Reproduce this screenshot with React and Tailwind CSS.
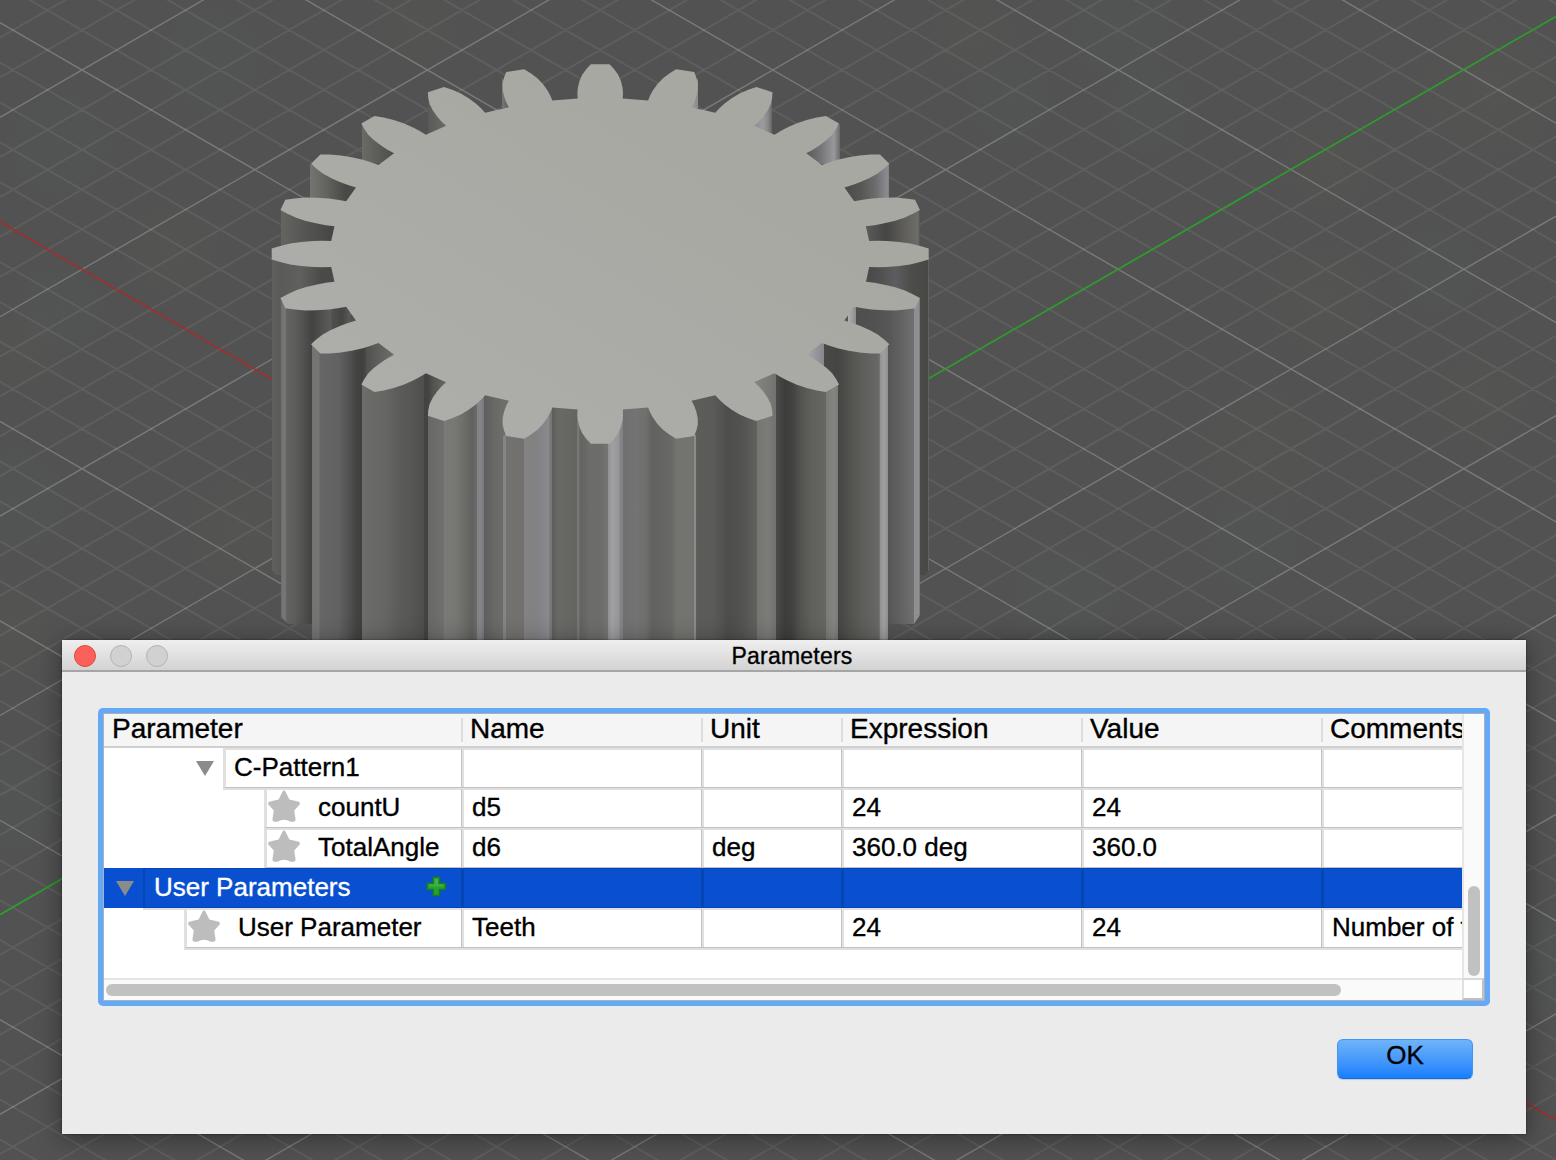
import React from "react";

const SLOPE = 0.5772;
const STEP = 39.88;

function Grid() {
  const minor = [];
  const major = [];
  for (let i = -26; i < 54; i++) {
    const a = 22.67 + i * STEP;
    const b = 117.3 + i * STEP;
    const out = i % 5 === 0 ? major : minor;
    if (i !== 5) out.push(`M0 ${a}L1556 ${a + SLOPE * 1556}`);
    if (i !== 20) out.push(`M0 ${b}L1556 ${b - SLOPE * 1556}`);
  }
  return (
    <g fill="none">
      <path d={minor.join("")} stroke="#ffffff" strokeOpacity="0.07" strokeWidth="2" />
      <path d={major.join("")} stroke="#ffffff" strokeOpacity="0.23" strokeWidth="1.4" />
      <path d={`M0 222L1556 ${222 + SLOPE * 1556}`} stroke="#a62c2c" strokeWidth="1.5" />
      <path d={`M0 914.6L1556 ${914.6 - SLOPE * 1556}`} stroke="#2f9a2f" strokeWidth="1.8" />
    </g>
  );
}

/* Gear outline: [radius, half width] of a tooth flank from root to tip. */
const FLANK = [
  [269, 22.5],
  [278, 22.8],
  [287, 22.4],
  [299, 20.8],
  [310, 18],
  [320, 13.8],
  [328.5, 9.3],
];

function gearPath() {
  const pts = [];
  const put = (r, t, ang) => {
    const x = r * Math.cos(ang) - t * Math.sin(ang);
    const y = r * Math.sin(ang) + t * Math.cos(ang);
    pts.push(`${(600.2 + x).toFixed(2)} ${(254 + y * 0.578).toFixed(2)}`);
  };
  for (let k = 0; k < 24; k++) {
    const a = (k * Math.PI) / 12;
    FLANK.forEach(([r, w]) => put(r, -w, a));
    [...FLANK].reverse().forEach(([r, w]) => put(r, w, a));
  }
  return "M" + pts.join("L") + "Z";
}

/* Side walls, back to front: polygon points and colour stops across x. */
const WALLS = [
  { p: "502,78 510,90 510,112 502,108", x: [502, 510], s: [[502, "#777775"], [510, "#5c5c5a"]] },
  { p: "428,92 446,110 446,132 428,142", x: [428, 446], s: [[428, "#5a5a58"], [446, "#6a6a67"]] },
  { p: "362,124 394,145 394,158 362,168", x: [362, 394], s: [[362, "#6a6a67"], [378, "#5c5c59"], [394, "#4c4c4a"]] },
  { p: "310,164 356,182 356,206 310,206", x: [310, 356], s: [[310, "#747471"], [325, "#646461"], [345, "#494947"], [356, "#494947"]] },
  { p: "281,210 333,220 333,246 281,252", x: [281, 333], s: [[281, "#646461"], [310, "#525250"], [333, "#464644"]] },
  { p: "698,78 691,95 691,112 698,108", x: [690, 698], s: [[690, "#a2a2a2"], [698, "#8b8b8d"]] },
  { p: "772,92 753,115 753,132 772,140", x: [753, 772], s: [[753, "#8d8d90"], [763, "#9b9ba0"], [768, "#88888b"], [772, "#666667"]] },
  { p: "840,124 806,150 806,162 840,166", x: [806, 840], s: [[806, "#585857"], [820, "#737375"], [834, "#98989c"], [838, "#7a7a7c"], [840, "#6a6a6a"]] },
  { p: "889,164 845,184 845,206 889,206", x: [845, 890], s: [[845, "#4c4c4a"], [860, "#555553"], [876, "#6d6d6e"], [885, "#87878b"], [888, "#8c8c90"], [890, "#6d6d6d"]] },
  { p: "919.5,210 867,222 867,246 919.5,250", x: [867, 920], s: [[867, "#5a5a5b"], [886, "#454544"], [905, "#605f5c"], [918, "#6d6c68"], [920, "#5a5a58"]] },
  { p: "272,254 333,265 333,575 276,575 272,570", x: [272, 333], s: [[272, "#60605e"], [281, "#5a5a58"], [300, "#60605e"], [322, "#4a4a48"], [333, "#4a4a48"]] },
  { p: "929,256 868,265 868,575 925,575 929,570", x: [868, 929], s: [[868, "#4a4a49"], [880, "#505050"], [895, "#5d5d60"], [912, "#4d4c49"], [928, "#484846"], [928, "#626262"], [929, "#626262"]] },
  { p: "280.5,298 350,295 350,624 288,624 281,617", x: [281, 350], s: [[281, "#646463"], [282, "#767674"], [286, "#747472"], [286, "#646462"], [295, "#5d5d5b"], [304, "#505050"], [312, "#434342"], [331, "#5c5c5b"], [332, "#50504f"], [342, "#454543"], [350, "#5a5a57"]] },
  { p: "920,298 848,295 848,624 914,624 920,615", x: [848, 920], s: [[848, "#b0b0b4"], [856, "#8b8b90"], [856, "#4e4e4c"], [872, "#52514f"], [888, "#565656"], [900, "#616162"], [914, "#707072"], [914, "#8f8f91"], [919, "#8f8f91"], [920, "#6d6d6e"]] },
  { p: "312,345 374,335 396,350 396,641 312,641", x: [312, 396], s: [[312, "#747472"], [319, "#757573"], [320, "#666665"], [338, "#626264"], [347, "#555555"], [355, "#464645"], [362, "#3f3f3d"], [366, "#484846"], [366, "#50504f"], [380, "#60605d"], [396, "#6e6e6b"]] },
  { p: "888,345 826,335 805,350 805,641 888,641", x: [805, 888], s: [[805, "#ababaf"], [824, "#88888c"], [824, "#484846"], [838, "#454543"], [850, "#52524f"], [862, "#5d5d5a"], [878, "#676765"], [880, "#77777a"], [880, "#929294"], [884, "#a0a0a2"], [888, "#8f8f92"]] },
  { p: "362,383 424,368 447,378 447,641 362,641", x: [362, 447], s: [[362, "#6e6e6c"], [372, "#696967"], [385, "#666663"], [398, "#5c5c5a"], [412, "#565653"], [424, "#4e4e4c"], [424, "#434341"], [428, "#434341"], [432, "#50504e"], [447, "#6b6b68"]] },
  { p: "838,384 777,368 753,378 753,641 838,641", x: [753, 838], s: [[753, "#888784"], [776, "#73726f"], [776, "#4b4b49"], [785, "#3d3d3b"], [792, "#414140"], [800, "#52524f"], [812, "#60605d"], [826, "#666663"], [826, "#7b7a76"], [834, "#868581"], [838, "#7c7b78"]] },
  { p: "428,415 484,390 509,396 509,641 428,641", x: [428, 509], s: [[428, "#686866"], [444, "#70706d"], [444, "#7a7a78"], [455, "#777774"], [462, "#706f6c"], [472, "#616160"], [477, "#6b6b6a"], [477, "#838386"], [481, "#858589"], [484, "#777778"], [484, "#5f5f5d"], [494, "#686866"], [503, "#6d6d6a"], [509, "#6d6d6a"]] },
  { p: "772,415 717,390 691,396 691,641 772,641", x: [691, 772], s: [[691, "#5d5c59"], [713, "#5b5b58"], [720, "#555554"], [728, "#4d4d4c"], [742, "#535352"], [754, "#5e5e5c"], [757, "#60605e"], [757, "#757572"], [768, "#7b7b78"], [772, "#777774"]] },
  { p: "503,436 552,403 579,405 579,641 503,641", x: [503, 579], s: [[503, "#858584"], [506, "#858584"], [506, "#73726f"], [524, "#72716e"], [524, "#838384"], [535, "#818182"], [545, "#87878c"], [549, "#89898e"], [550, "#777778"], [552, "#777778"], [552, "#5d5d5a"], [558, "#696966"], [577, "#646461"], [579, "#767673"]] },
  { p: "697,436 649,403 622,405 622,641 698,641", x: [622, 698], s: [[622, "#707072"], [637, "#737373"], [646, "#6f6f6e"], [652, "#62625f"], [660, "#646463"], [672, "#696967"], [676, "#73736f"], [694, "#737370"], [694, "#8b8b8b"], [696, "#8b8b8b"], [696, "#605f5d"], [698, "#605f5d"]] },
  { p: "577,410 623,410 623,641 577,641", x: [577, 623], s: [[577, "#777774"], [579, "#777774"], [580, "#62625f"], [590, "#6d6d6c"], [600, "#6c6c69"], [608, "#757574"], [608, "#919193"], [612, "#9fa0a3"], [619, "#96969a"], [620, "#868689"], [623, "#828284"]] },
];

/* Soft cool and warm patches on the ground: x, y, radius, gradient. */
const COOL = "url(#cool)";
const WARM = "url(#warm)";
const TINTS = [
  [210, 60, 60, COOL], [60, 145, 60, COOL], [415, 25, 55, WARM], [175, 250, 60, WARM],
  [975, 35, 55, WARM], [1010, 100, 50, COOL], [1150, 110, 50, COOL], [1120, 30, 60, COOL],
  [1490, 90, 90, WARM], [1330, 165, 60, WARM], [1320, 300, 70, WARM], [1440, 270, 50, COOL],
  [1260, 450, 80, WARM], [1480, 400, 60, WARM], [1250, 545, 55, COOL], [1065, 600, 60, COOL],
  [20, 350, 50, WARM], [60, 310, 50, COOL], [240, 530, 70, WARM], [15, 500, 60, COOL],
  [10, 630, 60, WARM], [15, 800, 60, COOL], [1540, 960, 60, COOL],
];

function Viewport() {
  return (
    <svg className="block h-full w-full" viewBox="0 0 1556 1160" aria-hidden="true">
      <defs>
        {WALLS.map((w, i) => (
          <linearGradient key={i} id={`wall${i}`} gradientUnits="userSpaceOnUse" x1={w.x[0]} x2={w.x[1]} y1="0" y2="0">
            {w.s.map(([x, c], j) => (
              <stop key={j} offset={(x - w.x[0]) / (w.x[1] - w.x[0])} stopColor={c} />
            ))}
          </linearGradient>
        ))}
        <linearGradient id="face" gradientUnits="userSpaceOnUse" x1="430" y1="420" x2="620" y2="100">
          <stop offset="0" stopColor="#adaea9" />
          <stop offset="1" stopColor="#a7a8a2" />
        </linearGradient>
        <radialGradient id="warm">
          <stop offset="0" stopColor="#706a55" stopOpacity="0.08" />
          <stop offset="1" stopColor="#706a55" stopOpacity="0" />
        </radialGradient>
        <radialGradient id="cool">
          <stop offset="0" stopColor="#557070" stopOpacity="0.09" />
          <stop offset="1" stopColor="#557070" stopOpacity="0" />
        </radialGradient>
      </defs>
      <rect width="1556" height="1160" fill="#525252" />
      {TINTS.map(([x, y, r, fill], i) => (
        <circle key={i} cx={x} cy={y} r={r} fill={fill} />
      ))}
      <Grid />
      {WALLS.map((w, i) => (
        <polygon key={i} points={w.p} fill={`url(#wall${i})`} />
      ))}
      <path d={gearPath()} fill="url(#face)" />
    </svg>
  );
}

function Star() {
  return (
    <svg className="ml-px block h-8 w-8 shrink-0" viewBox="0 0 32 32">
      <path
        d="M15 .8Q16 0 17 .8L21.4 9.6L31 11.8Q32.2 12.6 31.8 14.2L26.2 20.4L27.6 29.6Q27.4 31.4 25.8 31.8H22.6Q16 27.6 9.4 31.8H6.2Q4.6 31.4 4.4 29.6L5.8 20.4L.2 14.2Q-.2 12.6 1 11.8L10.6 9.6Z"
        fill="#bdbdbd"
      />
    </svg>
  );
}

function Plus() {
  return (
    <svg className="mt-[7px] mr-[14px] ml-auto block h-[21px] w-[21px]" viewBox="0 0 21 21">
      <path d="M7.2 1.2h6.2v6h6v6.2h-6v6H7.2v-6h-6V7.2h6z" fill="#22a52c" stroke="#1a7a2a" strokeWidth="1.5" strokeLinejoin="round" />
      <path d="M8.6 3h3.4v5.6h5.4v1.8H3.2V8.6h5.4z" fill="#3fb045" />
    </svg>
  );
}

function Triangle() {
  return (
    <svg className="mt-[13px] mr-[9px] ml-auto block h-[15px] w-[18px]" viewBox="0 0 18 15">
      <path d="M0 0h18L9 15z" fill="#8b8b8b" />
    </svg>
  );
}

const ROWS = [
  { label: "C-Pattern1", indent: "w-[119px]", open: true, cells: ["", "", "", "", ""] },
  { label: "countU", indent: "w-[160px]", star: true, cells: ["d5", "", "24", "24", ""] },
  { label: "TotalAngle", indent: "w-[160px]", star: true, cells: ["d6", "deg", "360.0 deg", "360.0", ""] },
  { label: "User Parameters", indent: "w-[39px]", open: true, selected: true, cells: ["", "", "", "", ""] },
  { label: "User Parameter", indent: "w-[80px]", star: true, cells: ["Teeth", "", "24", "24", "Number of teeth"] },
];

const COLS = ["w-[240px]", "w-[140px]", "w-[240px]", "w-[240px]", "w-[141px]"];
const HEADS = ["Name", "Unit", "Expression", "Value", "Comments"];

function Row({ row }) {
  const sel = row.selected;
  const edge = sel ? "border-[#0645b4]" : "border-t-[#e0e0e0] border-b-[#c0c0c0]";
  const base = `h-10 shrink-0 border-b shadow-[0_2px_0_#dfdfdf] ${edge} ${sel ? "border-t bg-[#0850d0] text-white" : "border-t-2 bg-white"}`;
  return (
    <div className="flex h-10 text-[26px] leading-[35px] whitespace-nowrap">
      <div className={`flex shrink-0 ${row.indent} ${sel ? "bg-[#0850d0]" : ""}`}>{row.open && <Triangle />}</div>
      <div className={`${base} flex min-w-0 flex-1 ${sel ? "border-l-2" : "border-l-[3px] border-l-[#e0e0e0]"}`}>
        {row.star && <Star />}
        <span className={row.star ? "ml-[18px]" : sel ? "mt-px ml-[9px]" : "ml-[8px]"}>{row.label}</span>
        {sel && <Plus />}
      </div>
      {row.cells.map((c, i) => (
        <div key={i} className={`${base} ${COLS[i]} overflow-hidden border-l ${sel ? "" : "border-l-[#c4c4c4]"}`}>
          <div className={`h-full border-l-2 pl-[8px] ${sel ? "border-[#0645b4]" : "border-[#e0e0e0]"}`}>{c}</div>
        </div>
      ))}
    </div>
  );
}

function ParameterTable() {
  return (
    <div className="h-[298px] rounded-[5px] bg-[#63a9f7] p-[5px]">
      <div className="flex h-[288px] border border-[#a9b0b8] bg-white">
        <div className="flex w-[1358px] flex-col overflow-hidden">
          <div className="flex h-[34px] shrink-0 border-b-2 border-[#cfcfcf] bg-[#f5f5f5] text-[28px] leading-[29px]">
            <div className="min-w-0 flex-1 pl-2">Parameter</div>
            {HEADS.map((h, i) => (
              <div key={h} className={`${COLS[i]} flex shrink-0 overflow-hidden`}>
                <span className="mt-[4px] mr-[7px] h-[24px] w-[2px] shrink-0 bg-[#dddddd]" />
                {h}
              </div>
            ))}
          </div>
          {ROWS.map((r) => <Row key={r.label} row={r} />)}
          <div className="mt-auto h-[22px] shrink-0 border-t-2 border-[#e6e6e6] bg-[#fafafa] pt-[4px] pl-[2px]">
            <div className="h-3 w-[1235px] rounded-full bg-[#c1c1c1]" />
          </div>
        </div>
        <div className="flex w-[22px] flex-col">
          <div className="flex flex-1 flex-col border-l-2 border-[#e6e6e6] bg-[#fafafa] pb-[2px] pl-[4px]">
            <div className="mt-auto h-[90px] w-3 rounded-full bg-[#c1c1c1]" />
          </div>
          <div className="h-[22px] border-2 border-[#c0c0c0] border-t-[#d8d8d8] border-l-[#e0e0e0] bg-white" />
        </div>
      </div>
    </div>
  );
}

export default function App() {
  return (
    <div className="relative h-[1160px] w-[1556px] overflow-hidden bg-[#525252] font-['Liberation_Sans',Arial,sans-serif] text-black">
      <Viewport />
      <section className="absolute top-[640px] left-[62px] flex h-[494px] w-[1464px] flex-col bg-[#ebebeb] shadow-[0_4px_24px_rgba(0,0,0,0.4),0_0_2px_rgba(0,0,0,0.5)] [-webkit-text-stroke:0.35px]">
        <header className="grid h-8 shrink-0 grid-cols-[1fr_auto_1fr] items-center border-b-2 border-[#a5a5a5] bg-linear-to-b from-[#efefef] to-[#d3d3d3]">
          <div className="flex gap-[14px] pt-[2px] pl-3">
            <span className="size-[22px] rounded-full border border-[#e2463f] bg-[#fc605b]" />
            <span className="size-[22px] rounded-full border border-[#b4b4b4] bg-[#d1d1d1]" />
            <span className="size-[22px] rounded-full border border-[#b4b4b4] bg-[#d1d1d1]" />
          </div>
          <h1 className="relative top-px right-[2px] text-[23px] leading-[30px] tracking-[0.2px]">Parameters</h1>
        </header>
        <div className="px-9 pt-9">
          <ParameterTable />
        </div>
        <div className="flex justify-end pt-[33px] pr-[53px]">
          <button className="h-10 w-[136px] rounded-[6px] border border-[#3f97f5] border-b-[#0f6ef2] bg-linear-to-b from-[#6eb4f9] to-[#157efc] pb-[8px] text-[26px] leading-[30px] shadow-[0_1px_1px_rgba(0,0,0,0.15)]">OK</button>
        </div>
      </section>
    </div>
  );
}
